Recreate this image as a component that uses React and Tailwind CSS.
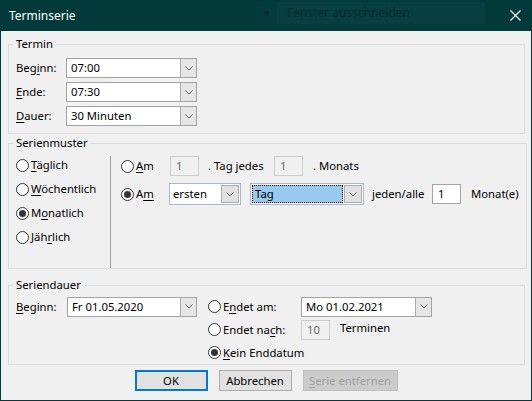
import clsx from "clsx";

function Chevron() {
  return (
    <svg width="8" height="5" viewBox="0 0 8 5" fill="none">
      <path d="M0.5 0.5L4 4L7.5 0.5" stroke="#606060" strokeWidth="1" />
    </svg>
  );
}

function Radio({ checked }) {
  return (
    <span className="w-[13px] h-[13px] rounded-full border border-[#333333] bg-white flex items-center justify-center shrink-0">
      {checked && <span className="w-[7px] h-[7px] rounded-full bg-[#333333]" />}
    </span>
  );
}

function RadioLabel({ checked, children, className }) {
  return (
    <div className={clsx("flex items-center gap-[2px]", className)}>
      <Radio checked={checked} />
      <span className="whitespace-nowrap">{children}</span>
    </div>
  );
}

function Key({ children }) {
  return <span className="underline underline-offset-[2px]">{children}</span>;
}

function Combo({ className, value }) {
  return (
    <div className={clsx("flex h-[20px] border border-[#a3a3a3] bg-white", className)}>
      <div className="flex-1 flex items-center pl-[4px] whitespace-nowrap">{value}</div>
      <div className="w-[16px] flex items-center justify-center bg-[#e5e5e5] border-l border-[#adadad]">
        <Chevron />
      </div>
    </div>
  );
}

function ListCombo({ className, value, selected }) {
  return (
    <div className={clsx("flex h-[22px] border border-[#a9b8ca] bg-white p-[1px]", className)}>
      <div
        className={clsx(
          "flex-1 flex items-center pl-[2px] whitespace-nowrap",
          selected && "bg-[#99c9ef] border border-dotted border-black"
        )}
      >
        {value}
      </div>
      <div className="w-[18px] ml-[1px] flex items-center justify-center bg-[#e1e1e1] border border-[#adadad]">
        <Chevron />
      </div>
    </div>
  );
}

function Field({ className, value, disabled }) {
  return (
    <div
      className={clsx(
        "h-[20px] flex items-center pl-[5px] border",
        disabled ? "border-[#cccccc] bg-[#f0f0f0] text-[#6d6d6d]" : "border-[#a3a3a3] bg-white",
        className
      )}
    >
      {value}
    </div>
  );
}

function Group({ title, className, children }) {
  return (
    <fieldset className={clsx("ml-[7px] mr-[6px] border border-[#dcdcdc] px-[7px]", className)}>
      <legend className="-ml-[3px] px-[3px] leading-[16px]">{title}</legend>
      {children}
    </fieldset>
  );
}

export default function App() {
  return (
    <div className="w-[532px] h-[401px] bg-[#023a3b] flex flex-col overflow-hidden font-['Noto_Sans',sans-serif] text-[11.3px] leading-[16px] text-black">
      {/* Titelleiste */}
      <div className="relative h-[31px] shrink-0 flex items-center pl-[9px] pr-[10px] text-white text-[12px]">
        <span>Terminserie</span>
        <div className="absolute left-[255px] top-[2px] w-[230px] h-[22px] flex bg-[#063e41]">
          <div className="w-[22px] flex items-center justify-center bg-[#043b3e]">
            <span className="w-[5px] h-[5px] rounded-full bg-[#022f31]" />
          </div>
          <span className="ml-[10px] flex items-center text-[#0a2f31] text-[12px]">Fenster ausschneiden</span>
        </div>
        <svg className="ml-auto mr-[1px]" width="11" height="11" viewBox="0 0 11 11">
          <path d="M0.5 0.5L10.5 10.5M10.5 0.5L0.5 10.5" stroke="white" strokeWidth="1.1" />
        </svg>
      </div>

      {/* Inhalt */}
      <div className="flex-1 mx-[1px] mb-[1px] bg-[#f0f0f0] flex flex-col">
        {/* Termin */}
        <Group title="Termin" className="mt-[5px] pt-[6px] pb-[7px]">
          <div className="flex flex-col gap-[4px]">
            <div className="flex items-center h-[20px]">
              <span className="w-[50px]">Beg<Key>i</Key>nn:</span>
              <Combo className="w-[131px]" value="07:00" />
            </div>
            <div className="flex items-center h-[20px]">
              <span className="w-[50px]"><Key>E</Key>nde:</span>
              <Combo className="w-[131px]" value="07:30" />
            </div>
            <div className="flex items-center h-[20px]">
              <span className="w-[50px]"><Key>D</Key>auer:</span>
              <Combo className="w-[131px]" value="30 Minuten" />
            </div>
          </div>
        </Group>

        {/* Serienmuster */}
        <Group title="Serienmuster" className="mt-[1px]">
          <div className="flex h-[117px]">
            <div className="w-[94px] mt-[2px] flex flex-col">
              <RadioLabel className="h-[24px]"><Key>T</Key>äglich</RadioLabel>
              <RadioLabel className="h-[24px]"><Key>W</Key>öchentlich</RadioLabel>
              <RadioLabel className="h-[24px]" checked>M<Key>o</Key>natlich</RadioLabel>
              <RadioLabel className="h-[24px]">Jäh<Key>r</Key>lich</RadioLabel>
            </div>
            <div className="w-px mt-[5px] bg-[#a0a0a0]" />
            <div className="ml-[10px] mt-[5px] flex flex-col gap-[7px]">
              <div className="flex items-center h-[20px]">
                <RadioLabel className="w-[49px]"><Key>A</Key>m</RadioLabel>
                <Field className="w-[29px]" value="1" disabled />
                <span className="ml-[9px] w-[66px]">. Tag jedes</span>
                <Field className="w-[29px]" value="1" disabled />
                <span className="ml-[10px]">. Monats</span>
              </div>
              <div className="flex items-center h-[22px]">
                <RadioLabel className="w-[48px]" checked>A<Key>m</Key></RadioLabel>
                <ListCombo className="w-[72px]" value="ersten" />
                <ListCombo className="ml-[9px] w-[114px]" value="Tag" selected />
                <span className="ml-[8px] w-[60px]">jeden/alle</span>
                <Field className="w-[29px]" value="1" />
                <span className="ml-[10px]">Monat(e)</span>
              </div>
            </div>
          </div>
        </Group>

        {/* Seriendauer */}
        <Group title="Seriendauer" className="mt-[8px] pt-[2px]">
          <div className="flex items-start">
            <div className="flex items-center h-[23px]">
              <span className="w-[51px]"><Key>B</Key>eginn:</span>
              <Combo className="w-[130px]" value="Fr 01.05.2020" />
            </div>
            <div className="ml-[11px] flex flex-col">
              <div className="flex items-center h-[23px]">
                <RadioLabel className="w-[93px]">E<Key>n</Key>det am:</RadioLabel>
                <Combo className="w-[131px]" value="Mo 01.02.2021" />
              </div>
              <div className="flex items-center h-[23px]">
                <RadioLabel className="w-[93px]">Endet na<Key>c</Key>h:</RadioLabel>
                <Field className="w-[29px]" value="10" disabled />
                <span className="ml-[10px] -mt-[4px]">Terminen</span>
              </div>
              <div className="flex items-center h-[23px]">
                <RadioLabel checked><Key>K</Key>ein Enddatum</RadioLabel>
              </div>
            </div>
          </div>
        </Group>

        {/* Schaltflächen */}
        <div className="mt-[5px] flex justify-center gap-[11px]">
          <button className="w-[73px] h-[21px] border-2 border-[#0078d7] bg-[#e1e1e1]">OK</button>
          <button className="w-[73px] h-[21px] border border-[#adadad] bg-[#e1e1e1]">Abbrechen</button>
          <button className="w-[95px] h-[21px] border border-[#bfbfbf] bg-[#cccccc] text-[#a0a0a0]">
            <Key>S</Key>erie entfernen
          </button>
        </div>
      </div>
    </div>
  );
}
